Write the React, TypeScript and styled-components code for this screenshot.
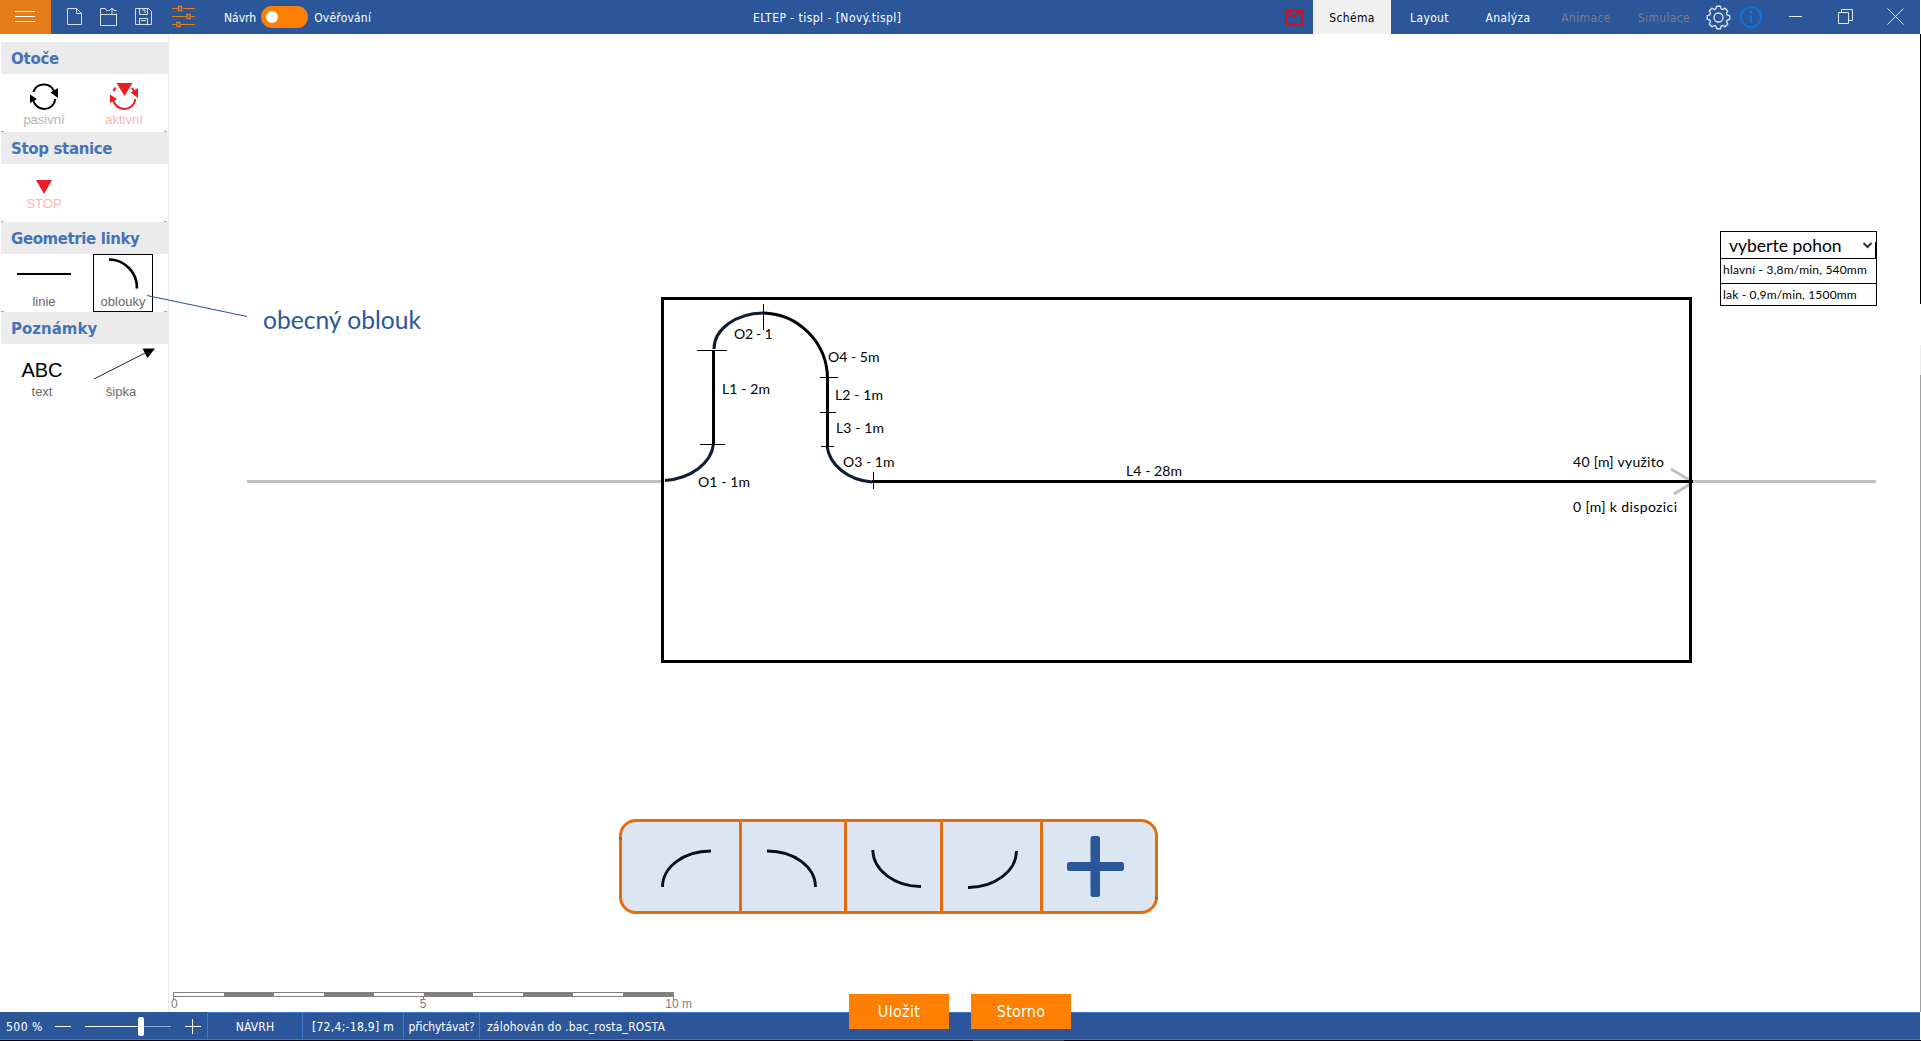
import React from 'react';
import styled, { createGlobalStyle } from 'styled-components';

const BLUE = '#2b579a';
const ui = "'DejaVu Sans Condensed', 'DejaVu Sans', sans-serif";
const arial = "'Liberation Sans', sans-serif";
const calibri = "Lato, 'Noto Sans', sans-serif";

const Global = createGlobalStyle`
  * { box-sizing: border-box; }
  body { margin: 0; background: #fff; overflow: hidden; }
  svg { display: block; flex: none; }
`;

const Page = styled.div`
  position: relative;
  display: flex;
  flex-direction: column;
  width: 1921px;
  height: 1041px;
  font: 12px/16px ${ui};
  white-space: nowrap;
`;

/* ---------- title bar ---------- */
const TitleBar = styled.header`
  display: flex;
  height: 34px;
  width: 1920px;
  background: ${BLUE};
  color: #fff;
`;
const BarGroup = styled.div<{ $w: number }>`
  display: flex;
  align-items: center;
  height: 34px;
  width: ${p => p.$w}px;
`;
const MenuButton = styled.button`
  display: flex;
  flex-direction: column;
  justify-content: center;
  align-items: center;
  gap: 4px;
  width: 51px;
  height: 34px;
  padding: 0 1px 1px 0;
  border: 0;
  background: #e47c17;
`;
const MenuLine = styled.i`
  width: 20px;
  height: 1px;
  background: #fff;
`;
const QuickTools = styled.nav`
  display: flex;
  align-items: center;
  gap: 17px;
  padding-left: 16px;
  height: 34px;
`;
const ModeSwitch = styled.div`
  display: flex;
  align-items: center;
  gap: 5px;
  margin-left: 28px;
`;
const Switch = styled.span`
  display: flex;
  align-items: center;
  width: 47px;
  height: 22px;
  padding-left: 5px;
  margin-right: 1px;
  border-radius: 11px;
  background: #ff8000;
`;
const Knob = styled.i`
  width: 12px;
  height: 12px;
  border-radius: 6px;
  background: #fff;
`;
const Text = styled.span<{ $ls?: number }>`
  letter-spacing: ${p => p.$ls ?? 0}px;
  padding-top: 2px;
`;
const Tab = styled.button<{ $w: number; $active?: boolean; $off?: boolean }>`
  width: ${p => p.$w}px;
  height: 34px;
  padding: 2px 0 0;
  border: 0;
  font: 12px/16px ${ui};
  letter-spacing: 0.35px;
  background: ${p => (p.$active ? '#f0f0f0' : 'transparent')};
  color: ${p => (p.$active ? '#000' : p.$off ? '#7b7f85' : '#fff')};
`;
const MailSlot = styled.div`
  display: flex;
  align-items: center;
  width: 33px;
  padding-left: 4px;
`;
const WindowTools = styled.div`
  display: flex;
  align-items: center;
  flex: 1;
`;
const Spacer = styled.i<{ $w: number }>`
  flex: none;
  width: ${p => p.$w}px;
`;

/* ---------- body ---------- */
const Body = styled.div`
  display: flex;
  height: 978px;
`;
const Sidebar = styled.aside`
  width: 169px;
  padding: 8px 0 0 1px;
  border-right: 1px solid #ececec;
`;
const Section = styled.section`
  height: 90px;
`;
const Heading = styled.h2<{ $ls: number }>`
  margin: 0;
  height: 32px;
  padding: 1px 0 0 10px;
  font: bold 15px/32px 'DejaVu Sans', sans-serif;
  letter-spacing: ${p => p.$ls}px;
  color: #4573b9;
  background: #ebebeb;
`;
const ToolRow = styled.div<{ $ends?: boolean }>`
  display: flex;
  justify-content: space-between;
  align-items: flex-end;
  height: 58px;
  ${p => p.$ends && `
    background:
      linear-gradient(#a8a8a8, #a8a8a8) 0 57px / 3px 1px no-repeat,
      linear-gradient(#a8a8a8, #a8a8a8) 163px 57px / 3px 1px no-repeat;
  `}
`;
const Tool = styled.button<{ $w: number; $color: string; $selected?: boolean; $nudge?: number; $lift?: number }>`
  display: flex;
  flex-direction: column;
  align-items: center;
  justify-content: flex-end;
  width: ${p => p.$w}px;
  height: 58px;
  padding: 0 0 ${p => p.$lift ?? 3}px;
  margin-right: ${p => p.$nudge ?? 0}px;
  border: ${p => (p.$selected ? '1px solid #000' : '0')};
  background: none;
  font: 13px/15px ${arial};
  color: ${p => p.$color};
`;
const ToolGlyph = styled.span`
  font: 20px/20px ${arial};
  color: #000;
  margin-bottom: 4px;
`;

const Workspace = styled.main`
  position: relative;
  flex: 1;
`;
const EdgeRail = styled.div`
  display: flex;
  flex-direction: column;
  width: 1px;
`;
const Edge = styled.i<{ $h: number; $c: string }>`
  height: ${p => p.$h}px;
  background: ${p => p.$c};
`;
const Drawing = styled.svg`
  position: absolute;
  left: 0;
  top: 0;
  pointer-events: none;
`;
const Callout = styled.div`
  position: absolute;
  left: 94px;
  top: 271px;
  font: 24.6px/30px ${calibri};
  color: ${BLUE};
`;
const DrivePicker = styled.div`
  position: absolute;
  left: 1551px;
  top: 197px;
  width: 157px;
  border: 1px solid #000;
  background: #fff;
  color: #000;
  font-family: ${calibri};
`;
const DriveHead = styled.div`
  display: flex;
  justify-content: space-between;
  height: 27px;
  padding: 1px 0 0 8px;
  border-bottom: 1px solid #000;
  font-size: 17.5px;
  line-height: 26px;
`;
const Caret = styled.span`
  display: flex;
  justify-content: flex-end;
  width: 16px;
  padding-top: 9px;
`;
const CaretBar = styled.i`
  width: 1px;
  height: 16px;
  margin-left: 1px;
  background: #000;
`;
const DriveOption = styled.div<{ $h: number; $ls: number; $line?: boolean }>`
  height: ${p => p.$h}px;
  padding-left: 2px;
  font-size: 12px;
  line-height: 22px;
  letter-spacing: ${p => p.$ls}px;
  ${p => p.$line && 'border-bottom: 1px solid #000;'}
`;
const ArcPalette = styled.div`
  position: absolute;
  left: 450px;
  top: 785px;
  display: grid;
  grid-template-columns: 120px 105px 96px 100px 112px;
  height: 95px;
  border: 3px solid #e46c0a;
  border-radius: 17px;
  background: #dce6f2;
`;
const ArcCell = styled.div<{ $last?: boolean }>`
  border-right: ${p => (p.$last ? '0' : '3px solid #e46c0a')};
`;
const ScaleBar = styled.div`
  position: absolute;
  left: 4px;
  top: 958px;
  width: 501px;
`;
const ScaleTrack = styled.div`
  display: flex;
  height: 5px;
  border: 1px solid #808080;
  background: #fff;
`;
const ScaleStep = styled.i<{ $on: boolean }>`
  flex: 1;
  background: ${p => (p.$on ? '#808080' : '#fff')};
`;
const ScaleTicks = styled.div`
  display: flex;
  justify-content: space-between;
`;
const ScaleTick = styled.i`
  width: 1px;
  height: 3px;
  background: #808080;
`;
const ScaleLabels = styled.div`
  display: flex;
  justify-content: space-between;
  width: 521px;
  margin: -3px 0 0 -2px;
  font: 12px/14px ${arial};
  color: #808080;
`;
const ScaleMiddle = styled.span`
  padding-left: 3px;
`;

/* ---------- status bar ---------- */
const StatusBar = styled.footer`
  display: flex;
  height: 28px;
  width: 1920px;
  background: ${BLUE};
  color: #fff;
  border-bottom: 1px solid #3f75cc;
`;
const ZoomBox = styled.div`
  display: flex;
  align-items: center;
  width: 207px;
  padding-left: 6px;
  padding-top: 1px;
`;
const StatusCell = styled.div<{ $w?: number; $ls: number }>`
  display: flex;
  justify-content: ${p => (p.$w ? 'center' : 'flex-start')};
  align-items: center;
  ${p => (p.$w ? `width: ${p.$w}px;` : 'flex: 1; padding-left: 7px;')}
  padding-top: 1px;
  border-top: 1px solid #3f75cc;
  border-left: 1px solid #3f75cc;
  letter-spacing: ${p => p.$ls}px;
`;
const BottomEdge = styled.div`
  display: flex;
  justify-content: center;
  height: 1px;
  padding-left: 116px;
  background: #000;
`;
const BottomGlow = styled.i`
  width: 91px;
  background: #3a3a3a;
`;
const Actions = styled.div`
  position: absolute;
  left: 849px;
  top: 994px;
  display: flex;
  gap: 22px;
`;
const ActionButton = styled.button<{ $ls: number }>`
  width: 100px;
  height: 35px;
  padding: 0;
  border: 0;
  background: #ff8000;
  color: #fff;
  font: 16px/35px ${ui};
  letter-spacing: ${p => p.$ls}px;
`;

/* ---------- icons ---------- */
const thin = { fill: 'none', stroke: '#d6deeb', strokeWidth: 1 } as const;

const NewIcon = () => (
  <svg width="15" height="18" {...thin}><path d="M.5.5h9l5 5v11h-14zM9.5.5v5h5" /></svg>
);
const OpenIcon = () => (
  <svg width="19" height="20" {...thin}>
    <path d="M1.500 7.500h16M9.500 3.500H7.500L6.500 1.500h-5v17h16v-12M14.500 3.500h3" />
    <path d="M13 7.500V1M10 4l3-3 3 3" />
  </svg>
);
const SaveIcon = () => (
  <svg width="18" height="18" {...thin}>
    <path d="M.5.5h13l3 3v13H.500zM4.500.500v6h8v-6M7 2h3v3M4.500 16.500v-6h8v6M6 12.500h5" />
  </svg>
);
const SlidersIcon = () => (
  <svg width="26" height="24" viewBox="-2 0 26 24" fill="none" stroke="#e47c17">
    <path d="M0 3.500h6M11 3.500h12M0 11.500h14M19 11.500h4M0 19.500h5M9 19.500h14" />
    <path d="M6.500 1.500h3v4h-3zM15 9.500h3v4h-3zM5 17.500h3v4H5z" strokeWidth="1.400" />
  </svg>
);
const MailIcon = () => (
  <svg width="19" height="18" fill="none" stroke="#d3101c" strokeWidth="2">
    <path d="M2 2.500h16v13.500H2zM3 3l7 6L17 3" />
  </svg>
);
const gearPath = (() => {
  const pts: string[] = [];
  const n = 8;
  for (let i = 0; i < n; i++) {
    const a = (i * 2 * Math.PI) / n;
    [[-0.3, 9], [-0.17, 11.4], [0.17, 11.4], [0.3, 9]].forEach(([d, r]) => {
      pts.push(`${(12.5 + r * Math.sin(a + d)).toFixed(2)} ${(12.5 - r * Math.cos(a + d)).toFixed(2)}`);
    });
  }
  return `M${pts.join('L')}Z`;
})();
const GearIcon = () => (
  <svg width="25" height="25" fill="none" stroke="#dfe6f1" strokeWidth="1.300" strokeLinejoin="round">
    <path d={gearPath} /><circle cx="12.500" cy="12.500" r="4.500" />
  </svg>
);
const InfoIcon = () => (
  <svg width="22" height="22" fill="none" stroke="#0b76e8" strokeWidth="1.600">
    <circle cx="11" cy="11" r="10" /><path d="M11 9.500v7" strokeWidth="2" /><circle cx="11" cy="6" r="1.500" fill="#0b76e8" stroke="none" />
  </svg>
);
const WindowIcons = () => (
  <svg width="150" height="34" fill="none" stroke="#e4eaf4">
    <path d="M22 16.500h13M71.500 12.500h10v11h-10zM74.500 12.500v-3h11v11h-4" /><path d="M120.500 8.500l16 16M136.500 8.500l-16 16" />
  </svg>
);

const RotateIcon = ({ color, stop }: { color: string; stop?: boolean }) => (
  <svg width="28" height="29" fill="none" stroke={color} strokeWidth="2">
    {stop
      ? <><path d="M3.500 8l2-3.500M22 5l2 3" /><path d="M6.500 0h16L14.500 13z" fill={color} stroke="none" /></>
      : <path d="M3.300 9A11.200 11.200 0 0 1 24 8" />}
    <path d="M3 15.500A11.200 11.200 0 0 0 25.300 16" />
    <path d="M20.500 9.500L28 5v10zM0 11.500V20l7-4z" fill={color} stroke="none" />
  </svg>
);
const StopIcon = () => (
  <svg width="18" height="16"><path d="M1 0h16L9 14z" fill="#ee1c25" /></svg>
);
const LineIcon = () => (
  <svg width="54" height="22"><path d="M0 2h54" stroke="#000" strokeWidth="2.200" /></svg>
);
const ArcIcon = () => (
  <svg width="31" height="39"><path d="M1 4.500A28 28.500 0 0 1 29 33.500" fill="none" stroke="#000" strokeWidth="2.600" /></svg>
);
const ArrowIcon = () => (
  <svg width="56" height="36" overflow="visible">
    <path d="M1 31L54 4" stroke="#222" /><path d="M49.500 .5H62L54.500 10z" />
  </svg>
);

const arcs = [
  'M662.500 887A48 36 0 0 1 711 851',
  'M767 851A48 36 0 0 1 815.500 887',
  'M872.800 850A48 37 0 0 0 921 886.500',
  'M968 887.500A48 37 0 0 0 1016.500 851',
];

const labels: [string, number, number, number][] = [
  ['O2 - 1', 734, 338.5, 38.5], ['O4 - 5m', 828, 361.5, 51.5], ['L1 - 2m', 722, 393.5, 48],
  ['L2 - 1m', 835, 399.5, 48], ['L3 - 1m', 836, 432.5, 48], ['O3 - 1m', 843, 466.5, 51.5],
  ['O1 - 1m', 698, 486.5, 52], ['L4 - 28m', 1126, 476, 56],
  ['40 [m] využito', 1573, 466.5, 91], ['0 [m] k dispozici', 1573, 512, 104],
];

const Schematic = () => (
  <Drawing width="1921" height="1012" fill="none" stroke="#000">
    <path d="M247 481.500H661M1692 481.500H1876" stroke="#c0c0c0" strokeWidth="3" />
    <path d="M1671 469L1691 481M1674 494L1691 483.500" stroke="#c0c0c0" strokeWidth="3" />
    <rect x="662.500" y="298.500" width="1028" height="363" strokeWidth="3" />
    <g stroke="#0d1c33" strokeWidth="3">
      <path d="M665 480.500A54 40 0 0 0 713.500 444M714 349A50 36 0 0 1 763 313M827 446A50 40 0 0 0 872 482" />
    </g>
    <path d="M713.500 350V445M763 313A66 66 0 0 1 827.500 378V447M872 481.500H1693" strokeWidth="3" />
    <path d="M697 350.500h30M700 444.500h25M763.500 304v26M820 377.500h18M820 412.500h16M821 446.500h13M873.500 472v17" />
    <path d="M147 295.500L247 316.500" stroke={BLUE} strokeWidth="1.200" />
    <g fill="#000" stroke="none" fontFamily={calibri} fontSize="14">
      {labels.map(([t, x, y, w]) => (
        <text key={t} x={x} y={y} textLength={w}>{t}</text>
      ))}
    </g>
    <g stroke="#03101f" strokeWidth="2.800">
      {arcs.map(d => <path key={d} d={d} />)}
    </g>
    <g fill={BLUE} stroke="none">
      <rect x="1067" y="862" width="57" height="9" rx="2.500" />
      <rect x="1090.500" y="836" width="9.500" height="61" rx="2.500" />
    </g>
    <path d="M619 837.500l3 2M1155 897l3 2" stroke={BLUE} />
  </Drawing>
);

export default function App() {
  return (
    <Page>
      <Global />
      <TitleBar>
        <BarGroup $w={753}>
          <MenuButton><MenuLine /><MenuLine /><MenuLine /></MenuButton>
          <QuickTools><NewIcon /><OpenIcon /><SaveIcon /><SlidersIcon /></QuickTools>
          <ModeSwitch>
            <Text>Návrh</Text>
            <Switch><Knob /></Switch>
            <Text $ls={0.2}>Ověřování</Text>
          </ModeSwitch>
        </BarGroup>
        <BarGroup $w={527}><Text $ls={0.46}>ELTEP - tispl - [Nový.tispl]</Text></BarGroup>
        <MailSlot><MailIcon /></MailSlot>
        <Tab $w={78} $active>Schéma</Tab>
        <Tab $w={77}>Layout</Tab>
        <Tab $w={80}>Analýza</Tab>
        <Tab $w={76} $off>Animace</Tab>
        <Tab $w={80} $off>Simulace</Tab>
        <WindowTools>
          <Spacer $w={2} /><GearIcon /><Spacer $w={9} /><InfoIcon /><Spacer $w={5} /><WindowIcons />
        </WindowTools>
      </TitleBar>

      <Body>
        <Sidebar>
          <Section>
            <Heading $ls={-0.25}>Otoče</Heading>
            <ToolRow $ends>
              <Tool $w={86} $lift={5} $color="#b4b4b4"><RotateIcon color="#000" />pasivní</Tool>
              <Tool $w={60} $lift={5} $color="#ffb4b6" $nudge={14}><RotateIcon color="#ee1c25" stop />aktivní</Tool>
            </ToolRow>
          </Section>
          <Section>
            <Heading $ls={-0.35}>Stop stanice</Heading>
            <ToolRow $ends>
              <Tool $w={86} $lift={11} $color="#ffb4b6"><StopIcon />STOP</Tool>
            </ToolRow>
          </Section>
          <Section>
            <Heading $ls={-0.4}>Geometrie linky</Heading>
            <ToolRow $ends>
              <Tool $w={86} $color="#696969"><LineIcon />linie</Tool>
              <Tool $w={60} $lift={2} $color="#696969" $selected $nudge={15}><ArcIcon />oblouky</Tool>
            </ToolRow>
          </Section>
          <Section>
            <Heading $ls={0}>Poznámky</Heading>
            <ToolRow>
              <Tool $w={82} $color="#696969"><ToolGlyph>ABC</ToolGlyph>text</Tool>
              <Tool $w={56} $color="#696969" $nudge={19}><ArrowIcon />šipka</Tool>
            </ToolRow>
          </Section>
        </Sidebar>

        <Workspace>
          <Callout>obecný oblouk</Callout>
          <DrivePicker>
            <DriveHead>
              vyberte pohon
              <Caret>
                <svg width="12" height="8"><path d="M1.500 1l4 4 4-4" fill="none" stroke="#333" strokeWidth="2" /></svg>
                <CaretBar />
              </Caret>
            </DriveHead>
            <DriveOption $h={25} $ls={0.2} $line>hlavní - 3,8m/min, 540mm</DriveOption>
            <DriveOption $h={21} $ls={0.18}>lak - 0,9m/min, 1500mm</DriveOption>
          </DrivePicker>
          <ArcPalette>
            <ArcCell /><ArcCell /><ArcCell /><ArcCell /><ArcCell $last />
          </ArcPalette>
          <ScaleBar>
            <ScaleTrack>
              {Array.from({ length: 10 }, (_, i) => <ScaleStep key={i} $on={i % 2 === 1} />)}
            </ScaleTrack>
            <ScaleTicks><ScaleTick /><ScaleTick /><ScaleTick /></ScaleTicks>
            <ScaleLabels><span>0</span><ScaleMiddle>5</ScaleMiddle><span>10 m</span></ScaleLabels>
          </ScaleBar>
        </Workspace>
        <EdgeRail>
          <Edge $h={270} $c="#000" /><Edge $h={41} $c="#fff" /><Edge $h={30} $c="#ececec" /><Edge $h={637} $c="#a0a0a0" />
        </EdgeRail>
      </Body>

      <StatusBar>
        <ZoomBox>
          <Text $ls={0.5}>500 %</Text>
          <svg width="160" height="27" fill="none" stroke="#fff" overflow="visible">
            <path d="M12 13.500h16M142 13.500h16M149.500 6v15" />
            <path d="M42 13.500h55" />
            <path d="M100 13.500h28" stroke="#8fa8cf" />
            <rect x="95" y="4" width="6" height="19" rx="2" fill="#fff" stroke="none" />
          </svg>
        </ZoomBox>
        <StatusCell $w={95} $ls={0.2}>NÁVRH</StatusCell>
        <StatusCell $w={101} $ls={0.3}>[72,4;-18,9] m</StatusCell>
        <StatusCell $w={76} $ls={-0.1}>přichytávat?</StatusCell>
        <StatusCell $ls={0.2}>zálohován do .bac_rosta_ROSTA</StatusCell>
      </StatusBar>
      <BottomEdge><BottomGlow /></BottomEdge>

      <Schematic />
      <Actions>
        <ActionButton $ls={0.3}>Uložit</ActionButton>
        <ActionButton $ls={0.2}>Storno</ActionButton>
      </Actions>
    </Page>
  );
}
